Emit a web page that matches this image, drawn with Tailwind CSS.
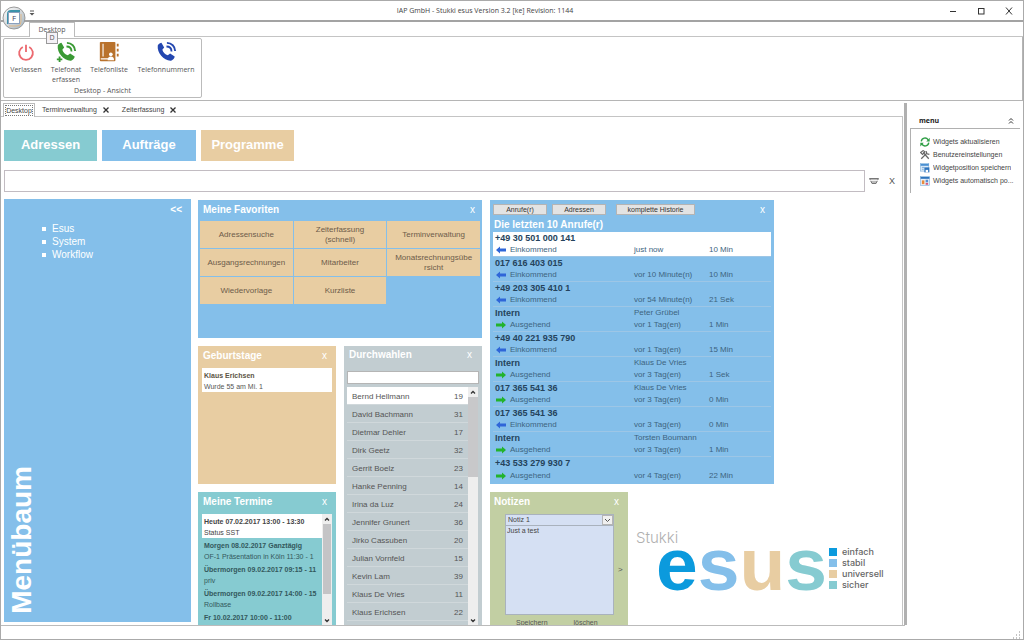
<!DOCTYPE html>
<html lang="de">
<head>
<meta charset="utf-8">
<title>IAP GmbH - Stukki esus</title>
<script src="https://cdn.jsdelivr.net/npm/@tailwindcss/browser@4"></script>
</head>
<body class="bg-white font-['Liberation_Sans',sans-serif] text-[8px] leading-3 text-[#555]">
<div class="flex h-screen flex-col overflow-hidden border border-[#aaa]">

  <!-- Title bar -->
  <header class="relative flex h-[21px] shrink-0 items-center border-b-2 border-[#a3a3a3] font-['Open_Sans',sans-serif]">
    <button aria-label="Datei" class="absolute left-[1px] top-[5px] z-10 flex size-6 items-center justify-center">
      <svg viewBox="0 0 24 24" class="size-6">
        <defs><linearGradient id="orb" x1="0" y1="0" x2="1" y2="1"><stop offset="0" stop-color="#fff"/><stop offset=".5" stop-color="#d5d9dc"/><stop offset="1" stop-color="#9fb4c2"/></linearGradient></defs>
        <circle cx="12" cy="12" r="11" fill="url(#orb)" stroke="#9a9a9a"/>
        <path d="M6 18V8q0-3 3-3h9" fill="none" stroke="#3c93ab" stroke-width="2"/>
        <path d="M7 20h8q4 0 4-4V8" fill="none" stroke="#e0b98a" stroke-width="1"/>
        <rect x="6.500" y="6.500" width="11" height="11" fill="#fff" stroke="#8aa0bd"/>
      </svg>
      <span class="absolute inset-0 text-center text-[8px] leading-6 text-[#446]">F</span>
    </button>
    <svg viewBox="0 0 6 6" class="ml-[28px] mt-1 size-[6px]"><path d="M1 1h4" stroke="#555"/><path d="M.5 3h5L3 5.500z" fill="#555"/></svg>
    <h1 class="flex-1 pr-[14px] text-center text-[7px] text-[#444]">IAP GmbH - Stukki esus Version 3.2 [ke] Revision: 1144</h1>
    <div class="flex items-center gap-5 pr-[10px]">
      <button aria-label="Minimieren"><svg viewBox="0 0 8 8" class="size-2"><path d="M1 4.500h6" stroke="#333"/></svg></button>
      <button aria-label="Maximieren"><svg viewBox="0 0 8 8" class="size-2"><rect x="1.500" y="1.500" width="5.500" height="5.500" fill="none" stroke="#333"/></svg></button>
      <button aria-label="Schließen"><svg viewBox="0 0 8 8" class="size-2"><path d="M1 .5l6 7M7 .5l-6 7" stroke="#333"/></svg></button>
    </div>
  </header>

  <!-- Ribbon tabs -->
  <nav class="relative flex h-[15px] shrink-0 border-b border-[#c4c4c4] pl-[28px] font-['Open_Sans',sans-serif]">
    <button class="-mb-px w-[46px] border border-b-0 border-[#bbb] bg-white text-[7px] leading-[14px] text-[#555]">Desktop</button>
    <span class="absolute left-[45px] top-[10px] z-10 h-3 w-3 border border-[#999] bg-[#f4f1f6] text-center text-[7px] leading-[10px]">D</span>
  </nav>

  <!-- Ribbon -->
  <section class="flex h-[64px] shrink-0 border-b border-[#b5b5b5] border-r px-[2px] pt-px font-['Open_Sans',sans-serif] text-[7px] leading-[10px] text-[#555]">
    <div class="flex h-[60px] w-[199px] flex-col rounded-xs border border-[#bbb]">
      <div class="flex flex-1 items-start pt-[2px]">
        <button class="flex w-[44px] flex-col items-center gap-[2px]">
          <svg viewBox="0 0 24 24" class="size-[22px]"><g fill="none" stroke="#ec6a70" stroke-width="2"><path d="M8.500 6.500a7.500 7.500 0 1 0 7 0"/><path d="M12 4v8"/></g></svg>
          <span>Verlassen</span>
        </button>
        <button class="flex w-[36px] flex-col items-center gap-[2px]">
          <svg viewBox="0 0 24 24" class="size-[22px]"><path d="M3 5c1-2 3-3 4-3l3 5-2 2.500c1 3 3 5 6 6l2.500-2 5 3.500c0 2-2 4-4 4.500C10 22 2 13 3 5z" fill="#3a9a35"/><g fill="none" stroke="#3a9a35" stroke-width="2"><path d="M13 2c5 0 9 4 9 9M12.500 6c3.500 0 5.500 2 5.500 5.500"/><path d="M5 17v6M2 20h6"/></g></svg>
          <span>Telefonat<br>erfassen</span>
        </button>
        <button class="flex w-[50px] flex-col items-center gap-[2px]">
          <svg viewBox="0 0 24 24" class="size-[22px]"><rect x="2" y="1" width="17" height="21" rx="1" fill="#b9722c"/><path d="M5.500 3v14M3 19.500h8" stroke="#fff" stroke-width="1.200"/><circle cx="14" cy="14.500" r="2" fill="#fff"/><path d="M10.500 21q0-4 3.500-4t3.500 4z" fill="#fff"/><path d="M21.500 3v3M21.500 8.500v3M21.500 14v3" stroke="#b9722c" stroke-width="2"/></svg>
          <span>Telefonliste</span>
        </button>
        <button class="flex w-[64px] flex-col items-center gap-[2px]">
          <svg viewBox="0 0 24 24" class="size-[22px]"><path d="M3 5c1-2 3-3 4-3l3 5-2 2.500c1 3 3 5 6 6l2.500-2 5 3.500c0 2-2 4-4 4.500C10 22 2 13 3 5z" fill="#2447b0"/><path d="M13 2c5 0 9 4 9 9M12.500 6c3.500 0 5.500 2 5.500 5.500" fill="none" stroke="#2447b0" stroke-width="2"/></svg>
          <span>Telefonnummern</span>
        </button>
      </div>
      <div class="pb-px text-center">Desktop - Ansicht</div>
    </div>
  </section>

  <div class="flex min-h-0 flex-1 pt-[2px]">
    <!-- Workspace -->
    <main class="flex min-w-0 flex-1 flex-col">
      <nav class="flex h-[14px] shrink-0 items-end border-b border-[#c4c4c4] pl-[2px] text-[7px] text-[#444]">
        <button class="-mb-px h-[14px] w-[32px] border border-b-0 border-[#bbb] bg-white p-px"><span class="flex justify-center border border-dotted border-[#777] leading-[9px]">Desktop</span></button>
        <button class="ml-[7px] flex items-center gap-[6px]">Terminverwaltung<svg viewBox="0 0 6 6" class="size-[6px]"><path d="M.5.500l5 5M5.500.500l-5 5" stroke="#333" stroke-width="1.300"/></svg></button>
        <button class="ml-[13px] flex items-center gap-[6px]">Zeiterfassung<svg viewBox="0 0 6 6" class="size-[6px]"><path d="M.5.500l5 5M5.500.500l-5 5" stroke="#333" stroke-width="1.300"/></svg></button>
      </nav>

      <div class="flex min-h-0 flex-1 flex-col overflow-hidden border-r border-[#c4c4c4] pl-[3px] pt-[13px]">
        <div class="flex shrink-0 gap-[5px] text-[13px] font-bold text-white">
          <button class="h-[31px] w-[93px] bg-[#86cbd1] pb-px">Adressen</button>
          <button class="h-[31px] w-[94px] bg-[#84bfea] pb-px">Aufträge</button>
          <button class="h-[31px] w-[93px] bg-[#e8cda2] pb-px">Programme</button>
        </div>

        <div class="mt-[9px] flex shrink-0 items-center">
          <input aria-label="Suche" class="h-[22px] min-w-0 flex-1 border border-[#c2bcc2] px-2 text-[10px] outline-none">
          <button aria-label="Filter" class="ml-[4px]"><svg viewBox="0 0 10 7" class="h-[7px] w-[10px]"><path d="M.5.500h9L7 5.500H3z" fill="#bbb" stroke="#777"/><path d="M1 2.500h8" stroke="#fff" stroke-width=".8"/></svg></button>
          <button class="ml-[10px] mr-[7px] text-[9px] text-[#555]" aria-label="Suche leeren">X</button>
        </div>

        <div class="mt-[7px] flex shrink-0 items-start">
          <!-- Menu tree -->
          <section class="relative flex h-[423px] w-[187px] flex-col bg-[#84bfea] text-[10px] text-white">
            <button class="mr-[9px] mt-[5px] self-end font-bold">&lt;&lt;</button>
            <ul class="ml-[38px] mt-[6px] leading-[13px]">
              <li class="flex items-center gap-[6px]"><span class="size-1 bg-white"></span><a href="#esus">Esus</a></li>
              <li class="flex items-center gap-[6px]"><span class="size-1 bg-white"></span><a href="#system">System</a></li>
              <li class="flex items-center gap-[6px]"><span class="size-1 bg-white"></span><a href="#workflow">Workflow</a></li>
            </ul>
            <h2 class="absolute bottom-[8px] left-[2px] rotate-180 text-[28px] font-bold leading-8 [writing-mode:vertical-rl]">Menübaum</h2>
          </section>

          <div class="ml-[7px] mt-px w-[284px]">
            <!-- Favourites -->
            <section class="h-[138px] bg-[#84bfea]">
              <div class="flex h-[21px] items-center justify-between pl-[5px] pr-[7px] pb-[2px] text-[10px] text-white"><h2 class="font-bold">Meine Favoriten</h2><button aria-label="Favoriten schließen">x</button></div>
              <div class="grid auto-rows-[27px] grid-cols-3 gap-px px-[2px] text-[#6d5c4a]">
                <button class="bg-[#e8cda2] leading-[10px]">Adressensuche</button>
                <button class="bg-[#e8cda2] leading-[10px]">Zeiterfassung<br>(schnell)</button>
                <button class="bg-[#e8cda2] leading-[10px]">Terminverwaltung</button>
                <button class="bg-[#e8cda2] leading-[10px]">Ausgangsrechnungen</button>
                <button class="bg-[#e8cda2] leading-[10px]">Mitarbeiter</button>
                <button class="bg-[#e8cda2] leading-[10px]">Monatsrechnungsübe<br>rsicht</button>
                <button class="bg-[#e8cda2] leading-[10px]">Wiedervorlage</button>
                <button class="bg-[#e8cda2] leading-[10px]">Kurzliste</button>
              </div>
            </section>

            <div class="mt-2 flex gap-2">
              <div class="flex w-[138px] flex-col gap-2">
                <!-- Birthdays -->
                <section class="h-[138px] bg-[#e8cda2]">
                  <div class="flex h-[22px] items-center justify-between pl-[5px] pr-[9px] pb-[3px] text-[10px] text-white"><h2 class="font-bold">Geburtstage</h2><button aria-label="Geburtstage schließen">x</button></div>
                  <div class="mx-[4px] h-[24px] bg-white px-[2px] pt-[2px] text-[7px] leading-[11px]"><b class="block text-[#5c5545]">Klaus Erichsen</b>Wurde 55 am Mi. 1</div>
                </section>
                <!-- Appointments -->
                <section class="h-[138px] bg-[#86cbd1]">
                  <div class="flex h-[22px] items-center justify-between pl-[5px] pr-[9px] pb-[3px] text-[10px] text-white"><h2 class="font-bold">Meine Termine</h2><button aria-label="Termine schließen">x</button></div>
                  <div class="mx-[4px] flex h-[112px]">
                    <ul class="min-w-0 flex-1 overflow-hidden whitespace-nowrap text-[7px] text-[#33585c]" id="termine"></ul>
                    <div class="flex w-[10px] flex-col items-center bg-[#eee]">
                      <svg viewBox="0 0 10 10" class="size-[10px] shrink-0"><path d="M3 6.500l2-2 2 2" fill="none" stroke="#333" stroke-width="1.300"/></svg>
                      <div class="h-[70px] w-2 bg-[#c4c4c6]"></div>
                      <svg viewBox="0 0 10 10" class="mt-auto size-[10px] shrink-0"><path d="M3 3.500l2 2 2-2" fill="none" stroke="#333" stroke-width="1.300"/></svg>
                    </div>
                  </div>
                </section>
              </div>
              <!-- Extensions -->
              <section class="h-[284px] w-[138px] bg-[#c2cdd1] px-[3px]">
                <div class="flex h-[25px] items-start justify-between pl-[2px] pr-[7px] pt-[3px] text-[10px] text-white"><h2 class="font-bold">Durchwahlen</h2><button aria-label="Durchwahlen schließen">x</button></div>
                <input aria-label="Durchwahl suchen" class="block h-[13px] w-full border border-[#b5b5b5] bg-white px-1 outline-none">
                <div class="mt-[3px] flex h-[239px]">
                  <div class="min-w-0 flex-1 overflow-hidden"><table class="w-full border-separate border-spacing-0"><tbody id="durchwahlen"></tbody></table></div>
                  <div class="mr-px flex w-[10px] flex-col items-center bg-[#eee]">
                    <svg viewBox="0 0 10 10" class="size-[10px] shrink-0"><path d="M3 6.500l2-2 2 2" fill="none" stroke="#333" stroke-width="1.300"/></svg>
                    <div class="h-[80px] w-full bg-[#c8c8ca]"></div>
                    <svg viewBox="0 0 10 10" class="mt-auto size-[10px] shrink-0"><path d="M3 3.500l2 2 2-2" fill="none" stroke="#333" stroke-width="1.300"/></svg>
                  </div>
                </div>
              </section>
            </div>
          </div>

          <div class="ml-2 mt-px">
            <!-- Calls -->
            <section class="h-[284px] w-[284px] bg-[#84bfea] px-[3px] pt-[4px]">
              <div class="flex items-start text-[7px] text-[#333]">
                <button class="h-[11px] w-[54px] border border-[#b4b4b4] bg-[#e3e3e3] leading-[9px]">Anrufe(r)</button>
                <button class="ml-[5px] h-[11px] w-[54px] border border-[#b4b4b4] bg-[#e3e3e3] leading-[9px]">Adressen</button>
                <button class="ml-[10px] h-[11px] w-[79px] border border-[#b4b4b4] bg-[#e3e3e3] leading-[9px]">komplette Historie</button>
                <button class="ml-auto mr-[6px] text-[10px] text-white" aria-label="Anrufe schließen">x</button>
              </div>
              <h2 class="h-[16px] pl-px pt-[3px] text-[10px] font-bold text-white">Die letzten 10 Anrufe(r)</h2>
              <table class="w-full table-fixed border-separate border-spacing-0 text-[#3d6480]">
                <colgroup><col class="w-[141px]"><col class="w-[75px]"><col></colgroup>
                <tbody id="anrufe"></tbody>
              </table>
            </section>

            <div class="mt-2 flex">
              <!-- Notes -->
              <section class="h-[142px] w-[138px] bg-[#c2cfa3]">
                <div class="flex h-[22px] items-center justify-between pl-[4px] pr-[9px] pb-[3px] text-[10px] text-white"><h2 class="font-bold">Notizen</h2><button aria-label="Notizen schließen">x</button></div>
                <div class="flex items-center">
                  <div class="ml-[15px] w-[109px]">
                    <div class="relative">
                      <select aria-label="Notiz wählen" class="block h-[12px] w-full appearance-none border border-[#a9b2bd] bg-[#d5e0f3] px-[2px] text-[7px] leading-[10px] text-[#444]"><option>Notiz 1</option></select>
                      <svg viewBox="0 0 11 10" class="pointer-events-none absolute right-px top-px h-[10px] w-[11px]"><rect x=".5" y=".5" width="10" height="9" fill="#f0f0f0" stroke="#b5b5b5"/><path d="M3 4l2.500 2.500L8 4" fill="none" stroke="#555"/></svg>
                    </div>
                    <textarea aria-label="Notiztext" class="block h-[89px] w-full resize-none border border-t-0 border-[#a9b2bd] bg-[#d5e0f3] px-px text-[7px] leading-[9px] text-[#444] outline-none">Just a test</textarea>
                  </div>
                  <button class="ml-[4px] pt-[11px]" aria-label="Nächste Notiz">&gt;</button>
                </div>
                <div class="flex gap-[26px] pl-[26px] pt-[2px] text-[7px] text-[#555]"><button>Speichern</button><button>löschen</button></div>
              </section>

              <!-- Product logo -->
              <div class="ml-2 pt-[37px]">
                <div class="font-['Inter',sans-serif] text-[15px] font-light leading-[17px] text-[#b0b0b0]">Stukki</div>
                <div class="flex items-start pl-[20px]">
                  <div class="flex h-[46px] text-[75px] font-bold leading-[36px]" aria-label="esus"><span class="text-[#0b9add]">e</span><span class="text-[#84bfea]">s</span><span class="text-[#e8cda2]">u</span><span class="text-[#86cbd1]">s</span></div>
                  <ul class="ml-[2px] font-['Inter',sans-serif] text-[9px] font-medium leading-[11px] text-[#666]">
                    <li class="flex items-center gap-[5px]"><span class="size-2 bg-[#0b9add]"></span>einfach</li>
                    <li class="flex items-center gap-[5px]"><span class="size-2 bg-[#84bfea]"></span>stabil</li>
                    <li class="flex items-center gap-[5px]"><span class="size-2 bg-[#e8cda2]"></span>universell</li>
                    <li class="flex items-center gap-[5px]"><span class="size-2 bg-[#86cbd1]"></span>sicher</li>
                  </ul>
                </div>
              </div>
            </div>
          </div>
        </div>
      </div>
    </main>

    <div class="ml-px w-[3px] shrink-0 bg-[#b0b0b0]"></div>

    <!-- Side menu -->
    <aside class="w-[116px] shrink-0 pl-[3px] pr-[3px] pt-[10px] text-[7px] text-[#444]">
      <div class="flex h-[15px] items-center justify-between pl-[9px] pr-[6px]"><h2 class="font-['Open_Sans',sans-serif] font-bold text-[#222]">menu</h2>
        <button aria-label="Einklappen"><svg viewBox="0 0 6 8" class="h-2 w-[6px]"><path d="M1 3.500L3 1.500l2 2M1 6.500l2-2 2 2" fill="none" stroke="#333"/></svg></button></div>
      <ul class="flex flex-col gap-px border-l border-t border-[#b0b0b0] pb-[6px] pl-[9px] pt-[7px]">
        <li><a href="#aktualisieren" class="flex items-center gap-[3px]"><svg viewBox="0 0 16 16" class="size-[10px] shrink-0"><g fill="none" stroke="#2e9e45" stroke-width="2.200"><path d="M2 7a6 6 0 0 1 11-2.500M14 9a6 6 0 0 1-11 2.500"/></g><path d="M15.500 1v6H10zM.5 15V9H6z" fill="#2e9e45"/></svg>Widgets aktualisieren</a></li>
        <li><a href="#einstellungen" class="flex items-center gap-[3px]"><svg viewBox="0 0 16 16" class="size-[10px] shrink-0"><path d="M2 14L11 5M5 4l9 10" stroke="#666" stroke-width="2"/><path d="M1 4l4-3 3 2-4 4zM10 2l1 4 4 1" fill="none" stroke="#666" stroke-width="1.800"/></svg>Benutzereinstellungen</a></li>
        <li><a href="#speichern" class="flex items-center gap-[3px]"><svg viewBox="0 0 16 16" class="size-[10px] shrink-0"><rect x="1" y="1" width="13" height="12" fill="#dcebf8" stroke="#7fb0dd"/><path d="M1 3h13" stroke="#4a90d2" stroke-width="3"/><path d="M3 7h4M3 10h3" stroke="#4a88c8"/><rect x="7" y="7" width="8" height="8" fill="#2d74bd"/><rect x="9" y="11" width="4" height="4" fill="#fff"/></svg><span class="truncate">Widgetposition speichern</span></a></li>
        <li><a href="#positionieren" class="flex items-center gap-[3px]"><svg viewBox="0 0 16 16" class="size-[10px] shrink-0"><rect x="1" y="1" width="14" height="14" fill="#e6f0fa" stroke="#7fb0dd"/><path d="M1 3h14" stroke="#2d74bd" stroke-width="3"/><rect x="3" y="7" width="4" height="6" fill="#e98b3c"/><rect x="9" y="6" width="4" height="4" fill="#5b8fd0"/><rect x="9" y="11" width="4" height="3" fill="#d7567a"/></svg>Widgets automatisch po...</a></li>
      </ul>
    </aside>
  </div>

  <!-- Status bar -->
  <footer class="flex h-[14px] shrink-0 items-end">
    <div class="h-full flex-1 border-t border-[#bbb]"></div>
    <div class="flex w-[118px] justify-end pr-[2px]"><svg viewBox="0 0 8 8" class="size-2"><path d="M6 1h1M6 4h1M6 7h1M3 4h1M3 7h1M0 7h1" stroke="#888"/></svg></div>
  </footer>
</div>

<script>
const termine = [
  ['Heute 07.02.2017 13:00 - 13:30', 'Status SST'],
  ['Morgen 08.02.2017 Ganztägig', 'OF-1 Präsentation in Köln 11:30 - 1'],
  ['Übermorgen 09.02.2017 09:15 - 11', 'priv'],
  ['Übermorgen 09.02.2017 14:00 - 15', 'Rollbase'],
  ['Fr 10.02.2017 10:00 - 11:00', ''],
];
document.getElementById('termine').innerHTML = termine.map(([t, s], i) =>
  `<li class="h-[24px] px-[2px] pt-[2px] leading-[11px] ${i ? '' : 'bg-white text-[#444]'}"><b class="block">${t}</b>${s}</li>`).join('');

const nummern = [['Bernd Hellmann',19],['David Bachmann',31],['Dietmar Dehler',17],['Dirk Geetz',32],['Gerrit Boelz',23],['Hanke Penning',14],['Irina da Luz',24],['Jennifer Grunert',36],['Jirko Cassuben',20],['Julian Vornfeld',15],['Kevin Lam',39],['Klaus De Vries',11],['Klaus Erichsen',22]];
document.getElementById('durchwahlen').innerHTML = nummern.map(([n, d], i) =>
  `<tr class="h-[18px] ${i ? '' : 'bg-white'}"><td class="border-b border-[#d0d8db] pl-[5px] pt-[3px]">${n}</td><td class="border-b border-[#d0d8db] pr-[5px] pt-[3px] text-right">${d}</td></tr>`).join('');

const anrufe = [
  ['+49 30 501 000 141','','in','just now','10 Min'],
  ['017 616 403 015','','in','vor 10 Minute(n)','10 Min'],
  ['+49 203 305 410 1','','in','vor 54 Minute(n)','21 Sek'],
  ['Intern','Peter Grübel','out','vor 1 Tag(en)','1 Min'],
  ['+49 40 221 935 790','','in','vor 1 Tag(en)','15 Min'],
  ['Intern','Klaus De Vries','out','vor 3 Tag(en)','1 Sek'],
  ['017 365 541 36','Klaus De Vries','out','vor 3 Tag(en)','0 Min'],
  ['017 365 541 36','','in','vor 3 Tag(en)','0 Min'],
  ['Intern','Torsten Boumann','out','vor 3 Tag(en)','1 Min'],
  ['+43 533 279 930 7','','out','vor 4 Tag(en)','22 Min'],
];
const pfeil = {
  in: '<svg viewBox="0 0 10 8" class="h-2 w-[10px]"><path d="M0 4l4-3.500v2h6v3H4v2z" fill="#2f66d8"/></svg>',
  out: '<svg viewBox="0 0 10 8" class="h-2 w-[10px]"><path d="M10 4L6 .500v2H0v3h6v2z" fill="#22b32c"/></svg>',
};
const linie = i => i < anrufe.length - 1 ? 'border-b border-[#9dc6e6]' : '';
document.getElementById('anrufe').innerHTML = anrufe.map(([nr, name, dir, zeit, dauer], i) =>
  `<tr class="h-[12px] ${i ? '' : 'bg-white'}"><td class="pl-[2px] text-[9px] font-bold text-[#24435c]">${nr}</td><td colspan="2">${name}</td></tr>
   <tr class="h-[13px] ${i ? '' : 'bg-white'}"><td class="pl-[3px] ${linie(i)}"><span class="flex items-center gap-[4px]">${pfeil[dir]}${dir === 'in' ? 'Einkommend' : 'Ausgehend'}</span></td><td class="${linie(i)}">${zeit}</td><td class="${linie(i)}">${dauer}</td></tr>`).join('');
</script>
</body>
</html>
